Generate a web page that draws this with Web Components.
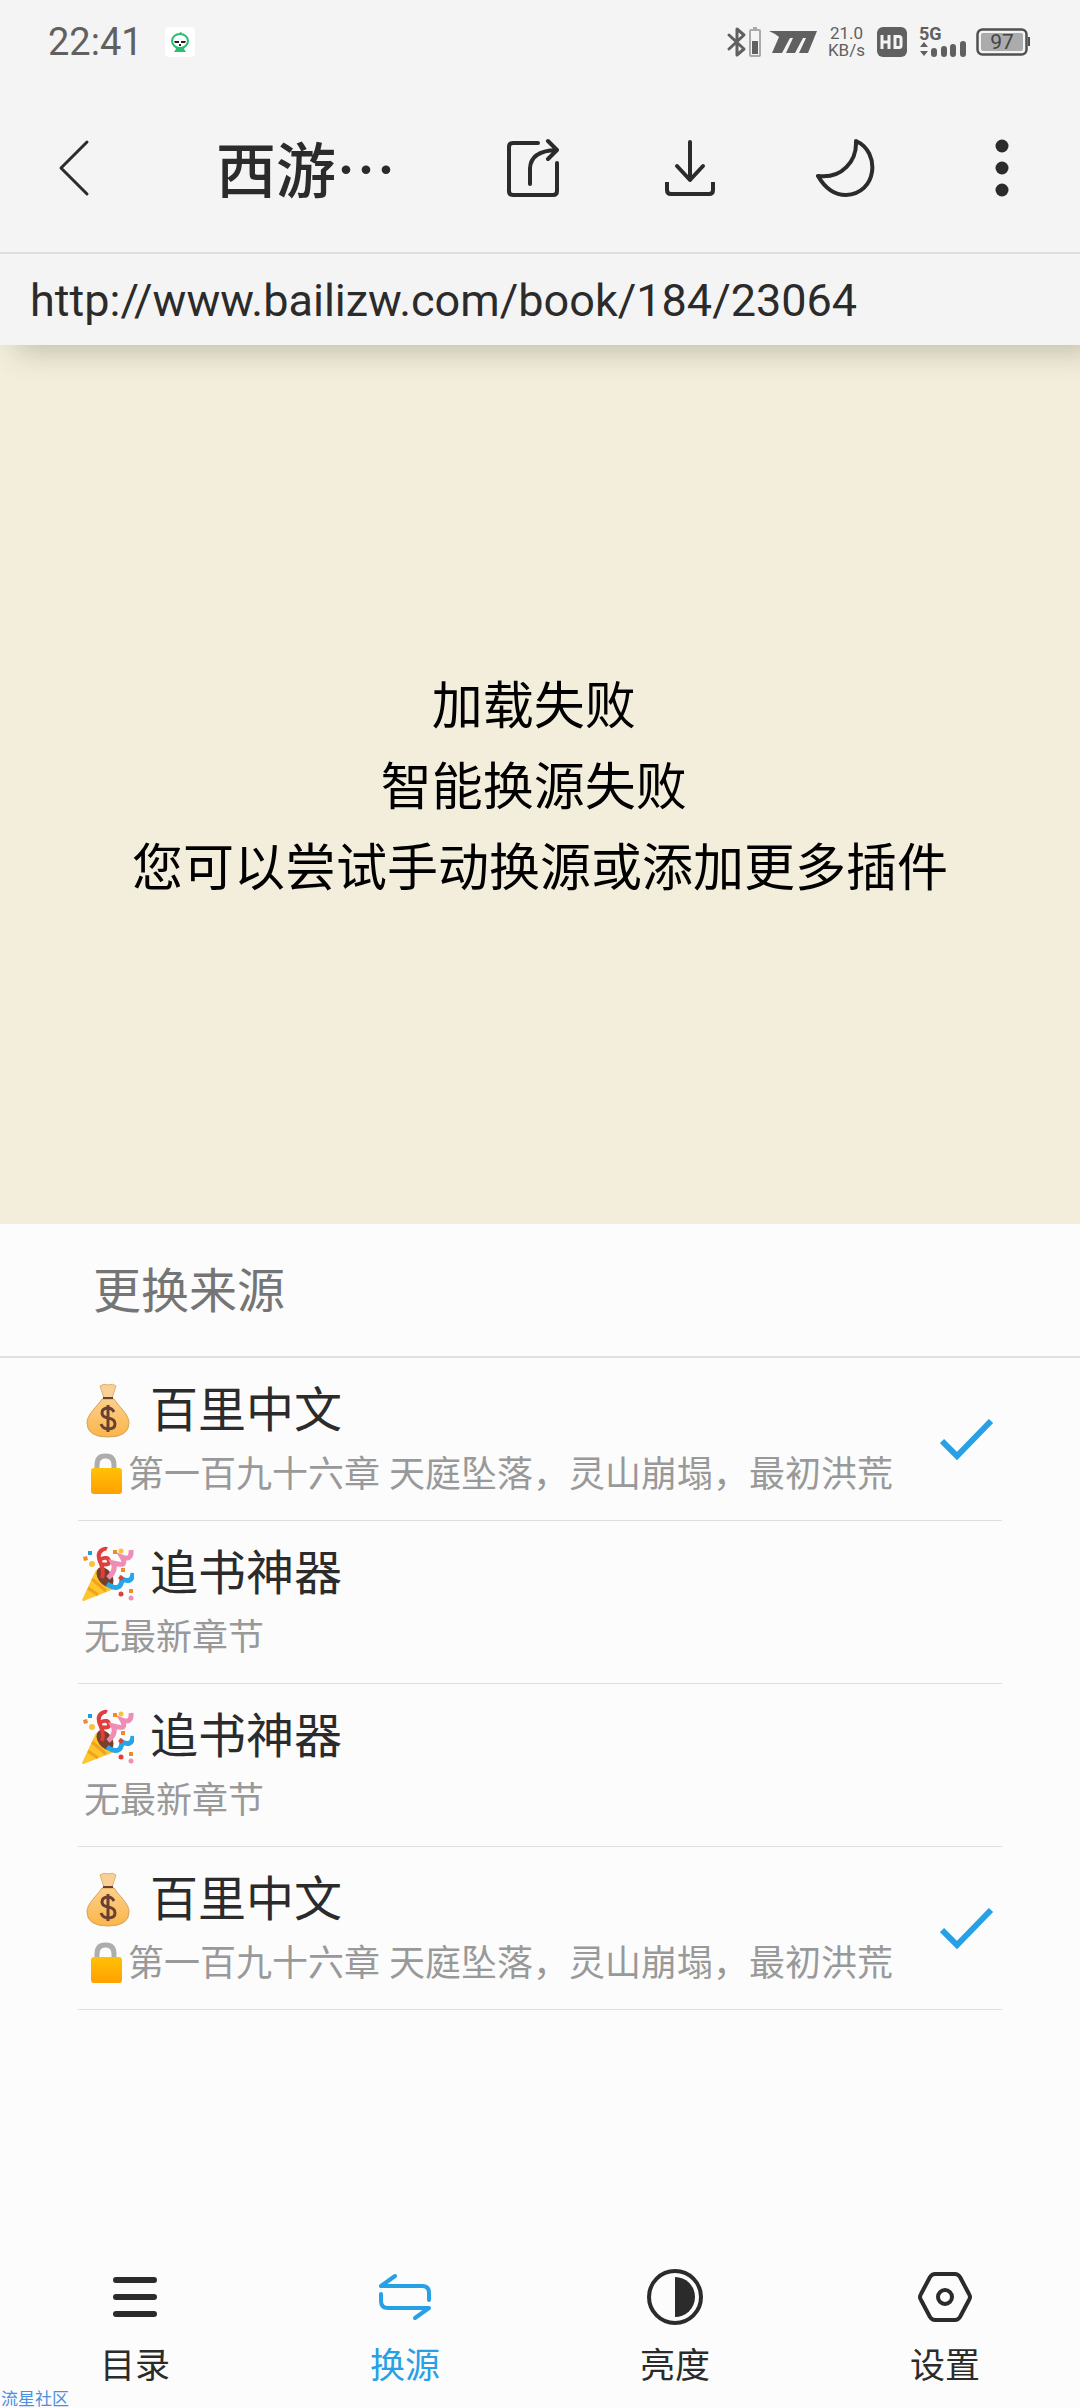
<!DOCTYPE html>
<html lang="zh-CN">
<head>
<meta charset="utf-8">
<meta name="viewport" content="width=device-width, initial-scale=1">
<title>西游</title>
<style>
  html, body { height: 100%; }
  body {
    margin: 0;
    font-family: Roboto, "Noto Sans CJK SC", sans-serif;
    color: #2b2b2b;
    background: #fcfcfc;
  }
</style>
</head>
<body>
<reader-page></reader-page>

<template id="t-page">
  <style>
    :host { display: flex; flex-direction: column; min-height: 100vh; overflow-x: clip; }
    header { background: #f4f4f4; position: relative; z-index: 1; box-shadow: 16px 6px 28px rgba(80, 85, 60, .32); }
    source-sheet { flex: 1; }
  </style>
  <header>
    <status-bar></status-bar>
    <title-bar heading="西游…"></title-bar>
    <url-bar>http://www.bailizw.com/book/184/23064</url-bar>
  </header>
  <load-message></load-message>
  <source-sheet heading="更换来源">
    <source-row kind="paid" name="百里中文" selected>第一百九十六章 天庭坠落，灵山崩塌，最初洪荒</source-row>
    <source-row kind="free" name="追书神器">无最新章节</source-row>
    <source-row kind="free" name="追书神器">无最新章节</source-row>
    <source-row kind="paid" name="百里中文" selected>第一百九十六章 天庭坠落，灵山崩塌，最初洪荒</source-row>
  </source-sheet>
  <bottom-nav></bottom-nav>
</template>

<template id="t-status">
  <style>
    :host { display: flex; align-items: center; justify-content: space-between; height: 84px; padding: 0 48px; color: #606060; }
    div { display: flex; align-items: center; }
    .left { gap: 22px; font-size: 38px; }
    svg { display: block; overflow: visible; }
    .rate { font-size: 17px; line-height: 17px; text-align: center; margin: 0 12px 0 11px; }
    .hd { width: 30px; height: 30px; }
    .net { display: grid; margin-left: 12px; width: 48px; font-size: 18px; line-height: 16px; font-weight: 700; }
    .batt { margin-left: 9px; }
    .m { margin-left: 8px; }
  </style>
  <div class="left"><span>22:41</span>
    <svg width="30" height="30" viewBox="0 0 30 30"><rect width="30" height="30" rx="4" fill="#fff"/><path d="M14 7q0-2 3-2-1 1-1 2z" fill="#2dbd70"/><ellipse cx="15" cy="14" rx="8" ry="7" fill="#fff" stroke="#2dbd70" stroke-width="2"/><path d="M9 25l2-3-1-2h10l-1 2 2 3z" fill="#2dbd70"/><path d="M9 14l5 0v2h-4zM21 14l-5 0v2h4zM14 17h2v2h-2z" fill="#222"/></svg>
  </div>
  <div class="right">
    <svg width="34" height="32" viewBox="0 0 34 32" fill="none"><path d="M2 9l15 14-7 6V3l7 6L2 23" stroke="#606060" stroke-width="3" stroke-linejoin="round" stroke-linecap="round"/><path d="M26 2h4" stroke="#aaa" stroke-width="2"/><rect x="23" y="4" width="10" height="26" rx="1" stroke="#aaa" stroke-width="2"/><path d="M25 15h6v13h-6z" fill="#606060"/></svg>
    <svg class="m" width="48" height="22" viewBox="0 0 48 22"><path d="M0 0h48L39 22h-9l7-15h-3L26 22h-9l7-15h-3L13 22H3L10 6 6 3z" fill="#606060"/></svg>
    <div class="rate">21.0<br>KB/s</div>
    <svg class="hd" viewBox="0 0 30 30"><rect width="30" height="30" rx="6" fill="#606060"/><path d="M5 8v14M12 8v14M5 15h7M18 9.500h4q2 0 2 2v7q0 2-2 2h-4z" fill="none" stroke="#f4f4f4" stroke-width="3"/></svg>
    <div class="net"><span>5G</span><svg width="48" height="16" viewBox="0 0 48 16"><path d="M5 0l4 5H1zM5 14l4-5H1z" fill="#606060"/><path d="M15 9v3M25 7v5M34 5v7M44 2v10" stroke="#606060" stroke-width="6" stroke-linecap="round"/></svg></div>
    <svg class="batt" width="56" height="28" viewBox="0 0 56 28"><rect x="1.500" y="1.500" width="49" height="25" rx="5" fill="none" stroke="#505050" stroke-width="2.500"/><rect x="5" y="5" width="42" height="18" rx="2" fill="#ababab"/><path d="M52 9h2v9h-2z" fill="#505050"/><text x="26" y="21" text-anchor="middle" font-size="21" fill="#444">97</text></svg>
  </div>
</template>

<template id="t-title">
  <style>
    :host { display: grid; grid-template-columns: 150px 1fr repeat(4, 156px); align-items: center; height: 168px; border-bottom: 2px solid #dedede; }
    h1 { margin: 0; padding: 0 0 2px 66px; font: 500 60px/84px "Noto Sans CJK SC", sans-serif; white-space: nowrap; }
    button { border: 0; background: none; padding: 0; height: 100%; display: grid; place-items: center; color: inherit; cursor: pointer; }
    svg { display: block; fill: none; stroke: currentColor; stroke-width: 4; stroke-linecap: round; stroke-linejoin: round; }
  </style>
  <button aria-label="返回"><svg width="60" height="60" viewBox="0 0 60 60"><path d="M42 4L16 30L42 56" stroke-width="3"/></svg></button>
  <h1></h1>
  <button aria-label="分享"><svg width="60" height="60" viewBox="0 0 60 60"><path d="M34 5H9q-4 0-4 4V53q0 4 4 4H49q4 0 4-4V25M26 46V30Q27 13 52 12M44 3l9 9-9 9"/></svg></button>
  <button aria-label="下载"><svg width="60" height="60" viewBox="0 0 60 60"><path d="M30 4V42M17 28L30 42L43 28"/><path d="M7 44v8q0 4 4 4H49q4 0 4-4V44" stroke-linecap="butt"/></svg></button>
  <button aria-label="夜间模式"><svg width="60" height="60" viewBox="0 0 60 60"><path d="M40 3C65 14 61 56 30 57Q13 57 2 38C26 41 41 23 40 3Z"/></svg></button>
  <button aria-label="更多"><svg width="60" height="60" viewBox="0 0 60 60"><g fill="currentColor" stroke="none"><circle cx="30" cy="8" r="6.500"/><circle cx="30" cy="30" r="6.500"/><circle cx="30" cy="52" r="6.500"/></g></svg></button>
</template>

<template id="t-url">
  <style>
    :host { display: block; padding: 2px 30px 0; font-size: 45px; line-height: 89px; white-space: nowrap; overflow: hidden; }
  </style>
  <slot></slot>
</template>

<template id="t-message">
  <style>
    :host { display: grid; place-content: center; box-sizing: border-box; height: 879px; padding-top: 6px; background: #f3eedc; color: #000; text-align: center; }
    p { margin: 0; font-size: 51px; line-height: 81px; white-space: pre; }
  </style>
  <p>加载失败 </p><p>智能换源失败 </p><p>您可以尝试手动换源或添加更多插件</p>
</template>

<template id="t-sheet">
  <style>
    :host { display: block; background: #fcfcfc; }
    h2 { margin: 0; padding: 4px 93px 0; font-size: 48px; font-weight: 400; line-height: 128px; color: #757575; border-bottom: 2px solid #e0e0e0; }
    .list { padding: 0 78px; }
  </style>
  <h2></h2>
  <div class="list"><slot></slot></div>
</template>

<template id="t-row">
  <style>
    :host { display: block; border-bottom: 1px solid #dedede; }
    button { display: flex; width: 100%; height: 162px; align-items: center; justify-content: space-between; padding: 0 8px 0 4px; border: 0; background: none; font: inherit; color: inherit; text-align: left; cursor: pointer; }
    .text { display: grid; gap: 4px; padding-top: 4px; }
    .name { display: flex; align-items: center; gap: 16px; font-size: 48px; line-height: 64px; }
    .latest { display: flex; align-items: center; font-size: 36px; line-height: 56px; color: #999; padding-left: 2px; white-space: nowrap; }
    svg { display: block; }
    .lock { margin-right: 4px; }
    .tick, .bag, .lock, .party { display: none; }
    :host([selected]) .tick, :host([kind="paid"]) .bag, :host([kind="paid"]) .lock, :host([kind="free"]) .party { display: block; }
  </style>
  <button>
    <span class="text">
      <span class="name">
        <svg class="bag" width="52" height="56" viewBox="0 0 52 56">
          <defs><linearGradient id="g" x1="0" y1="0" x2="0" y2="1"><stop offset="0" stop-color="#fbd08b"/><stop offset="1" stop-color="#fbb54a"/></linearGradient></defs>
          <path d="M18 3q4-3 8-1 5-2 8 1l-4 12h-8z" fill="#f9d196" stroke="#e0b070"/>
          <path d="M20 16h12c5 8 15 15 15 24q0 14-21 14T5 40C5 31 15 24 20 16z" fill="url(#g)" stroke="#d9a055"/>
          <path d="M21 15h10" stroke="#6b4030" stroke-width="2"/>
          <path d="M32 29q-2-4-6-4-6 0-6 5 0 4 6 5 7 1 7 6t-7 5q-5 0-7-5M26 22v27" fill="none" stroke="#6a4032" stroke-width="3"/>
        </svg>
        <svg class="party" width="52" height="56" viewBox="0 0 52 56" fill="none">
          <path d="M0 54L14 24Q20 24 26 31T32 43L4 54Q1 56 0 54z" fill="#fdc52e"/>
          <path d="M6 42l10 7M10 33l14 12" stroke="#f2a21b" stroke-width="3"/>
          <ellipse cx="23" cy="31" rx="7" ry="11" transform="rotate(-35 23 31)" fill="#78402c"/>
          <path d="M20 32Q22 25 19 18M19 18q-5-10 1-14 3-2 5-1M19 18q9 2 8-3t-8-2" stroke="#e03d3c" stroke-width="4"/>
          <path d="M26 32q9-8 5-15 8 2 10 1 2-2-1-7 10 4 9-7" stroke="#f08db6" stroke-width="5"/>
          <path d="M25 38q14 9 15-5 10 5 11-6" stroke="#23a7ea" stroke-width="5"/>
          <path d="M6 5h4v4H6z" fill="#239de0"/>
          <path d="M31 4h4v4h-4zM1 11l4-1 1 4-4 1zM39 22h4v4h-4zM47 43h4v4h-4z" fill="#ef8c28"/>
          <circle cx="10" cy="18" r="3" fill="#f9c23c"/><circle cx="39" cy="5" r="2.500" fill="#f9c23c"/>
          <path d="M39 29l3 3-3 3-3-3z" fill="#e23f3b"/><circle cx="39" cy="48" r="2.500" fill="#e23f3b"/><circle cx="49" cy="52" r="2.500" fill="#ee8ebb"/>
        </svg>
        <span class="label"></span>
      </span>
      <span class="latest">
        <svg class="lock" width="40" height="44" viewBox="0 0 40 44">
          <defs><linearGradient id="k" x1="0" y1="0" x2="0" y2="1"><stop offset="0" stop-color="#ffc107"/><stop offset="1" stop-color="#ffa000"/></linearGradient></defs>
          <path d="M13 17v-5q0-9 8-9h1q8 0 8 9v5" fill="none" stroke="#adadad" stroke-width="5"/>
          <rect x="7" y="15" width="31" height="26" rx="3" fill="url(#k)"/>
        </svg>
        <slot></slot>
      </span>
    </span>
    <svg class="tick" width="54" height="44" viewBox="0 0 54 44"><path d="M2 24L17 39L51 4" fill="none" stroke="#27a0e6" stroke-width="6"/></svg>
  </button>
</template>

<template id="t-nav">
  <style>
    :host { display: block; background: #fcfcfc; position: relative; }
    nav { display: grid; grid-template-columns: repeat(4, 1fr); padding-bottom: 15px; }
    small { position: absolute; left: 1px; bottom: 0; font-size: 17px; line-height: 17px; color: #4a90e2; }
  </style>
  <nav>
    <nav-item label="目录"><svg viewBox="0 0 60 60"><path d="M11 13H49M11 30H49M11 47H49" stroke-width="6"/></svg></nav-item>
    <nav-item label="换源" active><svg viewBox="0 0 60 60"><path d="M20 9L6 19H47q7 0 7 7v7" /><path d="M6 27v7q0 7 7 7H54L40 51"/></svg></nav-item>
    <nav-item label="亮度"><svg viewBox="0 0 60 60"><circle cx="30" cy="30" r="26"/><path d="M30 10a20 20 0 0 1 0 40z" fill="currentColor" stroke="none"/></svg></nav-item>
    <nav-item label="设置"><svg viewBox="0 0 60 60"><path d="M20 7H40q3 0 5 3L54 27q2 3 0 6L45 50q-2 3-5 3H20q-3 0-5-3L6 33q-2-3 0-6L15 10q2-3 5-3z"/><circle cx="30" cy="30" r="7"/></svg></nav-item>
  </nav>
  <small>流星社区</small>
</template>

<template id="t-item">
  <style>
    :host { display: block; }
    button { width: 100%; border: 0; background: none; padding: 0; display: grid; justify-items: center; gap: 14px; font: inherit; font-size: 35px; line-height: 52px; color: #2b2b2b; cursor: pointer; }
    :host([active]) button { color: #27a0e6; }
    ::slotted(svg) { display: block; width: 60px; height: 60px; fill: none; stroke: currentColor; stroke-width: 4; stroke-linecap: round; stroke-linejoin: round; }
  </style>
  <button><slot></slot><span></span></button>
</template>

<script>
  class TemplateElement extends HTMLElement {
    constructor() {
      super();
      const template = document.getElementById(this.constructor.template);
      this.attachShadow({ mode: 'open' }).append(template.content.cloneNode(true));
    }
    fill(selector, attribute) {
      this.shadowRoot.querySelector(selector).textContent = this.getAttribute(attribute);
    }
  }
  class StatusBar extends TemplateElement { static template = 't-status'; }
  class TitleBar extends TemplateElement {
    static template = 't-title';
    connectedCallback() { this.fill('h1', 'heading'); }
  }
  class UrlBar extends TemplateElement { static template = 't-url'; }
  class LoadMessage extends TemplateElement { static template = 't-message'; }
  class SourceSheet extends TemplateElement {
    static template = 't-sheet';
    connectedCallback() { this.fill('h2', 'heading'); }
  }
  class SourceRow extends TemplateElement {
    static template = 't-row';
    connectedCallback() { this.fill('.label', 'name'); }
  }
  class NavItem extends TemplateElement {
    static template = 't-item';
    connectedCallback() { this.fill('span', 'label'); }
  }
  class BottomNav extends TemplateElement { static template = 't-nav'; }
  class ReaderPage extends TemplateElement { static template = 't-page'; }
  customElements.define('status-bar', StatusBar);
  customElements.define('title-bar', TitleBar);
  customElements.define('url-bar', UrlBar);
  customElements.define('load-message', LoadMessage);
  customElements.define('source-sheet', SourceSheet);
  customElements.define('source-row', SourceRow);
  customElements.define('nav-item', NavItem);
  customElements.define('bottom-nav', BottomNav);
  customElements.define('reader-page', ReaderPage);
</script>
</body>
</html>
